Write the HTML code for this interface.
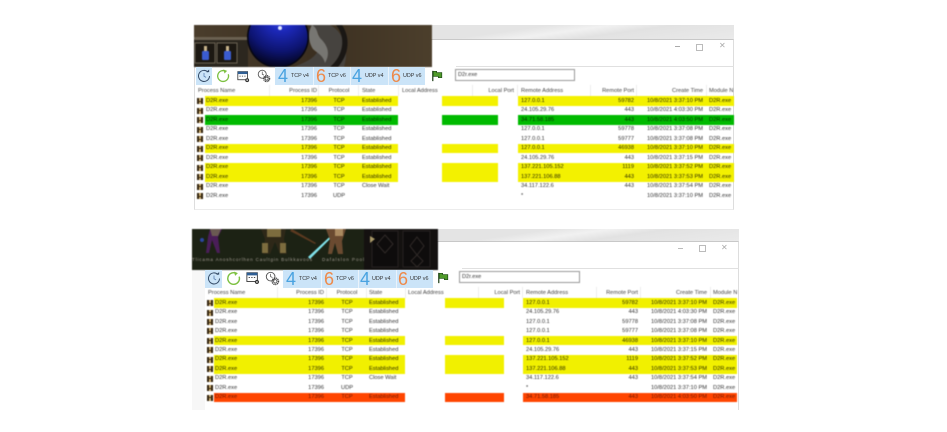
<!DOCTYPE html>
<html><head><meta charset="utf-8"><style>
html,body{margin:0;padding:0;background:#fff}
body{width:947px;height:432px;overflow:hidden;position:relative;font-family:"Liberation Sans",sans-serif}
.a{position:absolute}
.blur{filter:blur(.4px)}
.r{position:absolute;left:0;width:947px;height:9.5px;font-size:5.7px;line-height:9.5px;color:#333}
.r span{position:absolute;top:.8px;white-space:nowrap}
.h span{position:absolute;top:.8px;white-space:nowrap}
.r b{position:absolute;top:2px;width:6px;height:6px;background:linear-gradient(#3a2a10,#3a2a10) 0 2.5px/6px 1px no-repeat,linear-gradient(90deg,#2e200c 0 2px,#d4b678 2px 4px,#2e200c 4px)}
.y{color:#2c2c00}
.g{color:#003300}.o{color:#6e1800}
.h{position:absolute;left:0;width:947px;font-size:5.7px;line-height:11px;height:11px;color:#444}
.h i{position:absolute;top:0;width:1px;height:11px;background:#ececec}
.sel{position:absolute;background:#cbe4f8}
.n{position:absolute;font-size:18px;line-height:18px;font-weight:normal}
.bl{color:#4aa3e0}.or{color:#ee8a4a}
.l{position:absolute;font-size:5.4px;line-height:18px;color:#333}
.box{position:absolute;border:1px solid #999;background:#fff;font-size:5.6px;color:#333;box-sizing:border-box;padding-left:2px}
/* top columns */
.t .y{background:linear-gradient(90deg,transparent 205px,#f3f100 205px 398px,transparent 398px 442px,#f3f100 442px 498px,transparent 498px 518px,#f3f100 518px 734px,transparent 734px)}
.t .g{background:linear-gradient(90deg,transparent 205px,#00ba00 205px 398px,transparent 398px 442px,#00ba00 442px 498px,transparent 498px 518px,#00ba00 518px 734px,transparent 734px)}
.t b{left:197px}.t .c1{left:206px}.t .c2{right:630px}.t .c3{left:329px;width:20px;text-align:center}.t .c4{left:362px}.t .c6{left:521px}.t .c7{right:313px}.t .c8{right:244px}.t .c9{left:709px}
/* bottom columns */
.b .y{background:linear-gradient(90deg,transparent 214px,#f1f000 214px 405px,transparent 405px 445px,#f1f000 445px 504px,transparent 504px 523px,#f1f000 523px 737px,transparent 737px)}
.b .o{background:linear-gradient(90deg,transparent 214px,#ff4500 214px 405px,transparent 405px 445px,#ff4500 445px 504px,transparent 504px 523px,#ff4500 523px 737px,transparent 737px)}
.b b{left:207px}.b .c1{left:215px}.b .c2{right:623px}.b .c3{left:337px;width:20px;text-align:center}.b .c4{left:369px}.b .c6{left:526px}.b .c7{right:309px}.b .c8{right:240px}.b .c9{left:713px}
</style></head><body>
<svg width="0" height="0" style="position:absolute"><defs>
<symbol id="clk" viewBox="0 0 16 16"><path d="M12.5 3.5A6.3 6.3 0 1 0 14.3 8" fill="none" stroke="#334a66" stroke-width="1.1"/><path d="M10.5 3.5h3.4V.6z" fill="#334a66"/><path d="M8 4.5V8.3l2.4 1.3" fill="none" stroke="#5a7fb0" stroke-width=".9"/></symbol>
<symbol id="grn" viewBox="0 0 16 16"><path d="M11.5 2.8A6.2 6.2 0 1 0 14 6" fill="none" stroke="#7cc040" stroke-width="1.5"/><path d="M8.5 .6l4.2 1.6-3 3z" fill="#7cc040"/></symbol>
<symbol id="win" viewBox="0 0 16 16"><rect x="1" y="2" width="12" height="10" fill="#fff" stroke="#333" stroke-width="1"/><rect x="1" y="2" width="12" height="3" fill="#2f5f95"/><path d="M3 7.5h1.5M6 7.5h1.5M9 7.5h1.5" stroke="#333"/><circle cx="12.5" cy="12.5" r="2.4" fill="#333"/><circle cx="12.5" cy="12.5" r=".9" fill="#fff"/></symbol>
<symbol id="gear" viewBox="0 0 16 16"><circle cx="6" cy="6" r="4.6" fill="#fff" stroke="#555"/><path d="M6 3v3l2 1" fill="none" stroke="#555" stroke-width=".8"/><circle cx="11" cy="11" r="3.4" fill="none" stroke="#444" stroke-width="1.5" stroke-dasharray="1.3 .7"/><circle cx="11" cy="11" r="1.8" fill="none" stroke="#444" stroke-width=".9"/></symbol>
<symbol id="flag" viewBox="0 0 14 14"><path d="M1.5 1v12" stroke="#1a3a12" stroke-width="1.4"/><path d="M2 1.5h4v1.5h6v6H8V7.5H2z" fill="#4f9a2a" stroke="#1c4a14" stroke-width=".8"/></symbol>
</defs></svg>

<!-- TOP PANEL -->
<div class="a" style="left:432px;top:25px;width:302px;height:14px;background:linear-gradient(172deg,#e4e4e4 0 30%,#f1f1f1 45%,#e2e2e2 60%,#eaeaea 100%)"></div>
<div class="a" style="left:194px;top:39px;width:540px;height:171px;background:#fff;border-top:1px solid #c8c8c8;border-right:1px solid #ddd;border-left:1px solid #ddd;border-bottom:1px solid #ececec;box-sizing:border-box"></div>
<div class="a" style="left:456px;top:66px;width:278px;height:1px;background:#e0e0e0"></div>
<svg class="a" style="left:194px;top:25px;filter:blur(.4px)" width="238" height="42" viewBox="0 0 238 42">
<defs><radialGradient id="orb" cx=".55" cy=".15" r=".85"><stop offset="0" stop-color="#4050f0"/><stop offset=".3" stop-color="#1c28b8"/><stop offset=".7" stop-color="#0d1470"/><stop offset="1" stop-color="#03041e"/></radialGradient>
<linearGradient id="gr" x1="0" x2="1"><stop offset="0" stop-color="#4a3d2c"/><stop offset=".5" stop-color="#3b2f20"/><stop offset="1" stop-color="#4c3f2c"/></linearGradient></defs>
<rect width="238" height="42" fill="url(#gr)"/>
<rect y="15" width="54" height="27" fill="#2c271f"/>
<rect x="0" y="12" width="54" height="3" fill="#6a6050"/>
<rect x="1" y="18" width="20" height="20" fill="#1c1812" stroke="#6a6252" stroke-width="1"/>
<rect x="23" y="18" width="20" height="20" fill="#1c1812" stroke="#6a6252" stroke-width="1"/>
<rect x="8" y="26" width="7" height="9" rx="1" fill="#3a5cd0"/><rect x="10" y="21" width="3" height="5" fill="#c8b48c"/>
<rect x="30" y="26" width="7" height="9" rx="1" fill="#3a5cd0"/><rect x="32" y="21" width="3" height="5" fill="#c8b48c"/>
<circle cx="84" cy="12" r="31" fill="#050510"/>
<circle cx="84" cy="12" r="29.5" fill="url(#orb)"/>
<circle cx="86" cy="3" r="2" fill="#dfe6ff"/>
<path d="M114 0C126 4 128 14 124 26 118 36 108 38 100 42H150C156 22 148 6 136 0z" fill="#46433f"/>
<path d="M118 0c6 3 5 10 9 14 6 6 10 14 4 24-2-8-8-10-12-14-4-6-6-16-1-24z" fill="#777672"/>
<path d="M142 0c10 12 8 30-6 42h8c12-14 12-30 4-42z" fill="#1a1714"/>
</svg>
<div class="sel" style="left:196px;top:67px;width:16px;height:18px"></div>
<svg class="a" style="left:197px;top:69px" width="14" height="14"><use href="#clk"/></svg>
<svg class="a" style="left:216px;top:69px" width="14" height="14"><use href="#grn"/></svg>
<svg class="a" style="left:237px;top:70px" width="13" height="13"><use href="#win"/></svg>
<svg class="a" style="left:257px;top:69px" width="14" height="14"><use href="#gear"/></svg>
<div class="sel" style="left:275px;top:67px;width:150px;height:18px"></div>
<div class="a" style="left:312.5px;top:67px;width:1px;height:18px;background:#eaf3fb"></div>
<div class="a" style="left:349.5px;top:67px;width:1px;height:18px;background:#eaf3fb"></div>
<div class="a" style="left:387.5px;top:67px;width:1px;height:18px;background:#eaf3fb"></div>
<div class="n bl" style="left:278px;top:67px">4</div><div class="l" style="left:291px;top:67px">TCP v4</div>
<div class="n or" style="left:316px;top:67px">6</div><div class="l" style="left:328px;top:67px">TCP v6</div>
<div class="n bl" style="left:352px;top:67px">4</div><div class="l" style="left:365px;top:67px">UDP v4</div>
<div class="n or" style="left:391px;top:67px">6</div><div class="l" style="left:403px;top:67px">UDP v6</div>
<svg class="a" style="left:431px;top:70px" width="13" height="12"><use href="#flag"/></svg>
<div class="box blur" style="left:455px;top:69px;width:120px;height:12px;line-height:10px">D2r.exe</div>
<div class="a" style="left:675px;top:46px;width:5px;height:1px;background:#aaa"></div>
<div class="a" style="left:696px;top:44px;width:5px;height:5px;border:1px solid #bbb"></div>
<div class="a" style="left:719px;top:39px;font-size:8px;line-height:14px;color:#aaa">✕</div>

<div class="t blur">
<div class="h" style="top:85px"><span style="left:198px">Process Name</span><span style="right:630px">Process ID</span><span style="left:327px;width:24px;text-align:center">Protocol</span><span style="left:362px">State</span><span style="left:402px">Local Address</span><span style="right:433px">Local Port</span><span style="left:521px">Remote Address</span><span style="right:313px">Remote Port</span><span style="right:244px">Create Time</span><span style="left:709px">Module N</span>
<i style="left:269px"></i><i style="left:318px"></i><i style="left:358px"></i><i style="left:398px"></i><i style="left:472px"></i><i style="left:517px"></i><i style="left:590px"></i><i style="left:636px"></i><i style="left:706px"></i></div>
<div class="r y" style="top:96px"><b></b><span class="c1">D2R.exe</span><span class="c2">17396</span><span class="c3">TCP</span><span class="c4">Established</span><span class="c6">127.0.0.1</span><span class="c7">59782</span><span class="c8">10/8/2021 3:37:10 PM</span><span class="c9">D2R.exe</span></div>
<div class="r" style="top:105.5px"><b></b><span class="c1">D2R.exe</span><span class="c2">17396</span><span class="c3">TCP</span><span class="c4">Established</span><span class="c6">24.105.29.76</span><span class="c7">443</span><span class="c8">10/8/2021 4:03:30 PM</span><span class="c9">D2R.exe</span></div>
<div class="r g" style="top:115px"><b></b><span class="c1">D2R.exe</span><span class="c2">17396</span><span class="c3">TCP</span><span class="c4">Established</span><span class="c6">34.71.58.185</span><span class="c7">443</span><span class="c8">10/8/2021 4:03:50 PM</span><span class="c9">D2R.exe</span></div>
<div class="r" style="top:124.5px"><b></b><span class="c1">D2R.exe</span><span class="c2">17396</span><span class="c3">TCP</span><span class="c4">Established</span><span class="c6">127.0.0.1</span><span class="c7">59778</span><span class="c8">10/8/2021 3:37:08 PM</span><span class="c9">D2R.exe</span></div>
<div class="r" style="top:134px"><b></b><span class="c1">D2R.exe</span><span class="c2">17396</span><span class="c3">TCP</span><span class="c4">Established</span><span class="c6">127.0.0.1</span><span class="c7">59777</span><span class="c8">10/8/2021 3:37:08 PM</span><span class="c9">D2R.exe</span></div>
<div class="r y" style="top:143.5px"><b></b><span class="c1">D2R.exe</span><span class="c2">17396</span><span class="c3">TCP</span><span class="c4">Established</span><span class="c6">127.0.0.1</span><span class="c7">46938</span><span class="c8">10/8/2021 3:37:10 PM</span><span class="c9">D2R.exe</span></div>
<div class="r" style="top:153px"><b></b><span class="c1">D2R.exe</span><span class="c2">17396</span><span class="c3">TCP</span><span class="c4">Established</span><span class="c6">24.105.29.76</span><span class="c7">443</span><span class="c8">10/8/2021 3:37:15 PM</span><span class="c9">D2R.exe</span></div>
<div class="r y" style="top:162.5px"><b></b><span class="c1">D2R.exe</span><span class="c2">17396</span><span class="c3">TCP</span><span class="c4">Established</span><span class="c6">137.221.105.152</span><span class="c7">1119</span><span class="c8">10/8/2021 3:37:52 PM</span><span class="c9">D2R.exe</span></div>
<div class="r y" style="top:172px"><b></b><span class="c1">D2R.exe</span><span class="c2">17396</span><span class="c3">TCP</span><span class="c4">Established</span><span class="c6">137.221.106.88</span><span class="c7">443</span><span class="c8">10/8/2021 3:37:53 PM</span><span class="c9">D2R.exe</span></div>
<div class="r" style="top:181.5px"><b></b><span class="c1">D2R.exe</span><span class="c2">17396</span><span class="c3">TCP</span><span class="c4">Close Wait</span><span class="c6">34.117.122.6</span><span class="c7">443</span><span class="c8">10/8/2021 3:37:54 PM</span><span class="c9">D2R.exe</span></div>
<div class="r" style="top:191px"><b></b><span class="c1">D2R.exe</span><span class="c2">17396</span><span class="c3">UDP</span><span class="c6">*</span><span class="c8">10/8/2021 3:37:10 PM</span><span class="c9">D2R.exe</span></div>
</div>

<!-- BOTTOM PANEL -->
<div class="a" style="left:438px;top:229px;width:301px;height:12px;background:linear-gradient(172deg,#e4e4e4 0 30%,#f1f1f1 45%,#e2e2e2 60%,#eaeaea 100%)"></div>
<div class="a" style="left:205px;top:241px;width:534px;height:169px;background:#fff;border-top:1px solid #c8c8c8;border-right:1px solid #ddd;box-sizing:border-box"></div>
<div class="a" style="left:192px;top:270px;width:13px;height:140px;background:#f7f7f7"></div>
<div class="a" style="left:462px;top:268px;width:277px;height:1px;background:#e0e0e0"></div>
<svg class="a" style="left:192px;top:229px;filter:blur(.4px)" width="246" height="41" viewBox="0 0 246 41">
<rect width="246" height="41" fill="#1c2214"/>
<rect x="172" width="74" height="41" fill="#141110"/>
<path d="M180 2h26v36h-26zM211 2h27v36h-27z" fill="#0e0c0c" stroke="#262120" stroke-width="1"/>
<path d="M193 6l8 9-8 9-8-9zM225 8l7 9-7 9-7-9zM225 26l6 6-6 6-6-6z" fill="none" stroke="#302a28"/>
<path d="M178 7l5 3-5 4z" fill="#a89868"/>
<path d="M18 0h12l-4 8 2 16h-3l-5-13-3 13h-3l2-16z" fill="#4a1e58"/>
<path d="M18 0h11l-3 7h-6z" fill="#6a5a52"/>
<circle cx="10" cy="11" r="2" fill="#2a46a0"/>
<path d="M69 0h25l-2 10 3 15h-7l-5-12-5 12h-7l2-15z" fill="#2e2818"/>
<path d="M75 0h14v8H75zM70 14h6v10h-6zM88 14h6v10h-6z" fill="#7c6c3e"/>
<path d="M100 0l24 14-1 1-25-13z" fill="#5c3a20"/>
<path d="M116 28L146 0l1 1-29 29z" fill="#7fe0e8"/>
<path d="M134 0h20l-4 12 1 13h-5l-3-11-3 11h-4l2-14z" fill="#6a4a30"/>
<path d="M143 0h8v7h-8z" fill="#aa8a60"/>
<text x="0" y="32" font-family="Liberation Sans,sans-serif" font-size="4.6" fill="#a09a90" textLength="120">Tlicama Anoshcorlhen Caultgin Bulkkavoos</text>
<text x="130" y="32" font-family="Liberation Sans,sans-serif" font-size="4.6" fill="#a09a90" textLength="42">Dafalslon Pool</text>
</svg>
<div class="sel" style="left:205px;top:270px;width:17px;height:18px"></div>
<svg class="a" style="left:207px;top:271px" width="14" height="15"><use href="#clk"/></svg>
<svg class="a" style="left:226px;top:271px" width="15" height="15"><use href="#grn"/></svg>
<svg class="a" style="left:246px;top:271px" width="14" height="14"><use href="#win"/></svg>
<svg class="a" style="left:265px;top:271px" width="15" height="15"><use href="#gear"/></svg>
<div class="sel" style="left:283px;top:270px;width:150px;height:18px"></div>
<div class="a" style="left:321px;top:270px;width:1px;height:18px;background:#eaf3fb"></div>
<div class="a" style="left:358px;top:270px;width:1px;height:18px;background:#eaf3fb"></div>
<div class="a" style="left:396px;top:270px;width:1px;height:18px;background:#eaf3fb"></div>
<div class="n bl" style="left:286px;top:270px">4</div><div class="l" style="left:299px;top:270px">TCP v4</div>
<div class="n or" style="left:324px;top:270px">6</div><div class="l" style="left:336px;top:270px">TCP v6</div>
<div class="n bl" style="left:360px;top:270px">4</div><div class="l" style="left:372px;top:270px">UDP v4</div>
<div class="n or" style="left:398px;top:270px">6</div><div class="l" style="left:410px;top:270px">UDP v6</div>
<svg class="a" style="left:437px;top:272px" width="13" height="12"><use href="#flag"/></svg>
<div class="box blur" style="left:459px;top:271px;width:121px;height:12px;line-height:10px">D2r.exe</div>
<div class="a" style="left:678px;top:248px;width:5px;height:1px;background:#bbb"></div>
<div class="a" style="left:699px;top:245px;width:5px;height:5px;border:1px solid #bbb"></div>
<div class="a" style="left:721px;top:241px;font-size:8px;line-height:14px;color:#aaa">✕</div>

<div class="b blur">
<div class="h" style="top:287px"><span style="left:208px">Process Name</span><span style="right:623px">Process ID</span><span style="left:335px;width:24px;text-align:center">Protocol</span><span style="left:369px">State</span><span style="left:408px">Local Address</span><span style="right:427px">Local Port</span><span style="left:526px">Remote Address</span><span style="right:309px">Remote Port</span><span style="right:240px">Create Time</span><span style="left:713px">Module N</span>
<i style="left:277px"></i><i style="left:326px"></i><i style="left:366px"></i><i style="left:405px"></i><i style="left:478px"></i><i style="left:522px"></i><i style="left:596px"></i><i style="left:640px"></i><i style="left:710px"></i></div>
<div class="r y" style="top:298px"><b></b><span class="c1">D2R.exe</span><span class="c2">17396</span><span class="c3">TCP</span><span class="c4">Established</span><span class="c6">127.0.0.1</span><span class="c7">59782</span><span class="c8">10/8/2021 3:37:10 PM</span><span class="c9">D2R.exe</span></div>
<div class="r" style="top:307.5px"><b></b><span class="c1">D2R.exe</span><span class="c2">17396</span><span class="c3">TCP</span><span class="c4">Established</span><span class="c6">24.105.29.76</span><span class="c7">443</span><span class="c8">10/8/2021 4:03:30 PM</span><span class="c9">D2R.exe</span></div>
<div class="r" style="top:317px"><b></b><span class="c1">D2R.exe</span><span class="c2">17396</span><span class="c3">TCP</span><span class="c4">Established</span><span class="c6">127.0.0.1</span><span class="c7">59778</span><span class="c8">10/8/2021 3:37:08 PM</span><span class="c9">D2R.exe</span></div>
<div class="r" style="top:326.4px"><b></b><span class="c1">D2R.exe</span><span class="c2">17396</span><span class="c3">TCP</span><span class="c4">Established</span><span class="c6">127.0.0.1</span><span class="c7">59777</span><span class="c8">10/8/2021 3:37:08 PM</span><span class="c9">D2R.exe</span></div>
<div class="r y" style="top:335.8px"><b></b><span class="c1">D2R.exe</span><span class="c2">17396</span><span class="c3">TCP</span><span class="c4">Established</span><span class="c6">127.0.0.1</span><span class="c7">46938</span><span class="c8">10/8/2021 3:37:10 PM</span><span class="c9">D2R.exe</span></div>
<div class="r" style="top:345.3px"><b></b><span class="c1">D2R.exe</span><span class="c2">17396</span><span class="c3">TCP</span><span class="c4">Established</span><span class="c6">24.105.29.76</span><span class="c7">443</span><span class="c8">10/8/2021 3:37:15 PM</span><span class="c9">D2R.exe</span></div>
<div class="r y" style="top:354.7px"><b></b><span class="c1">D2R.exe</span><span class="c2">17396</span><span class="c3">TCP</span><span class="c4">Established</span><span class="c6">137.221.105.152</span><span class="c7">1119</span><span class="c8">10/8/2021 3:37:52 PM</span><span class="c9">D2R.exe</span></div>
<div class="r y" style="top:364.2px"><b></b><span class="c1">D2R.exe</span><span class="c2">17396</span><span class="c3">TCP</span><span class="c4">Established</span><span class="c6">137.221.106.88</span><span class="c7">443</span><span class="c8">10/8/2021 3:37:53 PM</span><span class="c9">D2R.exe</span></div>
<div class="r" style="top:373.6px"><b></b><span class="c1">D2R.exe</span><span class="c2">17396</span><span class="c3">TCP</span><span class="c4">Close Wait</span><span class="c6">34.117.122.6</span><span class="c7">443</span><span class="c8">10/8/2021 3:37:54 PM</span><span class="c9">D2R.exe</span></div>
<div class="r" style="top:383px"><b></b><span class="c1">D2R.exe</span><span class="c2">17396</span><span class="c3">UDP</span><span class="c6">*</span><span class="c8">10/8/2021 3:37:10 PM</span><span class="c9">D2R.exe</span></div>
<div class="r o" style="top:392.5px"><b></b><span class="c1">D2R.exe</span><span class="c2">17396</span><span class="c3">TCP</span><span class="c4">Established</span><span class="c6">34.71.58.185</span><span class="c7">443</span><span class="c8">10/8/2021 4:03:50 PM</span><span class="c9">D2R.exe</span></div>
</div>
</body></html>
